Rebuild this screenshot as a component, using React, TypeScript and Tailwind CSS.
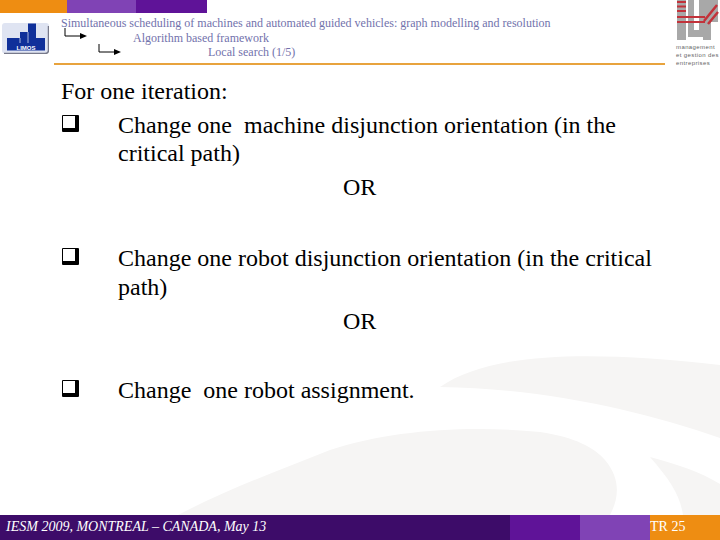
const serif = { fontFamily: '"Liberation Serif", serif' }

function Arrow({ className }: { className: string }) {
	return (
		<svg className={className} width="24" height="12" viewBox="0 0 24 12">
			<path d="M1 0V8H16" fill="none" stroke="#000" strokeWidth="1" />
			<path d="M16 5L23 8L16 11Z" fill="#000" />
		</svg>
	)
}

function Limos() {
	return (
		<svg className="ml-[2px] mt-[10px] shrink-0" width="47" height="31" viewBox="0 0 47 31">
			<rect width="47" height="30.5" rx="3" fill="#dfe4f2" />
			<path d="M46.5 3V27Q46.5 30.5 43 30.5H2" fill="none" stroke="#77798a" strokeWidth="1.5" />
			<path d="M5 27.5V15H18V9H26V0.5H34V15H43V27.5Z" fill="#10309a" />
			<path d="M18 15V20M26 9V20" stroke="#dfe4f2" strokeWidth="0.75" />
			<text x="24" y="26.5" textAnchor="middle" fontSize="6" fill="#fff" fontFamily="Liberation Sans" fontWeight="700">LIMOS</text>
		</svg>
	)
}

function IupLogo() {
	return (
		<div className="mt-[-13px] flex w-[43px] shrink-0 flex-col items-start">
			<svg width="43" height="42" viewBox="0 0 43 42">
				<rect x="1" y="0" width="9" height="40" fill="#a8a8a8" />
				<path d="M12 0H18V30H23V0H29V37H12Z" fill="#a8a8a8" />
				<path d="M27 0H42V22H35V40H27Z" fill="#a8a8a8" />
				<path d="M1 2H10M1 6.5H10M1 11H10M1 17H29M1 22H29" stroke="#c2323a" strokeWidth="2" />
				<path d="M28 21L41 5M32 24L42 12" stroke="#c2323a" strokeWidth="2.5" />
			</svg>
			<div className="mt-[1px] whitespace-nowrap text-[6px] leading-[8px] tracking-[0.4px] text-[#666]" style={{ fontFamily: '"Liberation Sans", sans-serif' }}>
				<p>management</p>
				<p>et gestion des</p>
				<p>entreprises</p>
			</div>
		</div>
	)
}

function Bullet() {
	return <span className="ml-[1px] mt-[4px] box-border block h-[17px] w-[17px] shrink-0 rounded-[1px] border border-b-4 border-r-4 border-black" />
}

function Item({ children, or, orGap }: { children: React.ReactNode; or?: boolean; orGap?: string }) {
	return (
		<div>
			<div className="flex">
				<div className="w-[57px] shrink-0"><Bullet /></div>
				<p className="w-[540px]">{children}</p>
			</div>
			{or && <p className={orGap}>OR</p>}
		</div>
	)
}

function App() {
	return (
		<main className="relative flex h-[540px] w-[720px] flex-col overflow-hidden bg-white text-black" style={serif}>
			<svg className="absolute left-0 top-0" width="720" height="540" viewBox="0 0 720 540">
				<path d="M440 387C490 352 590 350 720 365V438C640 410 540 388 440 387Z" fill="#f6f5f4" />
				<path d="M178 515C230 488 280 470 330 450C390 430 470 425 540 432C575 437 595 448 605 460C622 480 618 500 610 515Z" fill="#f6f5f4" />
				<path d="M650 457C680 465 700 472 720 484V515H683C680 495 670 480 650 457Z" fill="#f6f5f4" />
			</svg>
			<div className="relative flex h-[13px] w-[207px] shrink-0">
				<div className="w-[67px] bg-[#ee8d12]" />
				<div className="w-[69px] bg-[#8043b5]" />
				<div className="w-[71px] bg-[#5f1398]" />
			</div>
			<header className="relative flex h-[52px] shrink-0">
				<Limos />
				<div className="ml-[5px] h-[52px] w-[611px] shrink-0 border-b-2 border-[#e8a33d] pt-[3px] text-[12px] leading-[14.5px] text-[#7272ac]">
					<p className="pl-[7px]">Simultaneous scheduling of machines and automated guided vehicles: graph modelling and resolution</p>
					<div className="flex">
						<Arrow className="ml-[10px] mt-[-3px]" />
						<p className="ml-[45px]">Algorithm based framework</p>
					</div>
					<div className="flex">
						<Arrow className="ml-[44px] mt-[-1px]" />
						<p className="ml-[86px]">Local search (1/5)</p>
					</div>
				</div>
				<div className="ml-[11px]"><IupLogo /></div>
			</header>
			<section className="relative ml-[61px] flex-1 pt-[12px] text-[24px] leading-[28.5px]">
				<p className="mb-[5px]">For one iteration:</p>
				<Item or orGap="mt-[5px] pl-[282px]">Change one&nbsp; machine disjunction orientation (in the critical path)</Item>
				<div className="h-[43px]" />
				<Item or orGap="mt-[6px] pl-[282px]">Change one robot disjunction orientation (in the critical path)</Item>
				<div className="h-[40px]" />
				<Item>Change&nbsp; one robot assignment.</Item>
			</section>
			<footer className="relative flex h-[25px] shrink-0 text-[14px] leading-[24px] text-white">
				<div className="w-[510px] bg-[#3d0c69] pl-[6px] italic">IESM 2009, MONTREAL – CANADA, May 13</div>
				<div className="w-[70px] bg-[#5f1398]" />
				<div className="w-[70px] bg-[#8043b5]" />
				<div className="w-[70px] bg-[#ee8d12]">TR 25</div>
			</footer>
		</main>
	)
}

export default App
